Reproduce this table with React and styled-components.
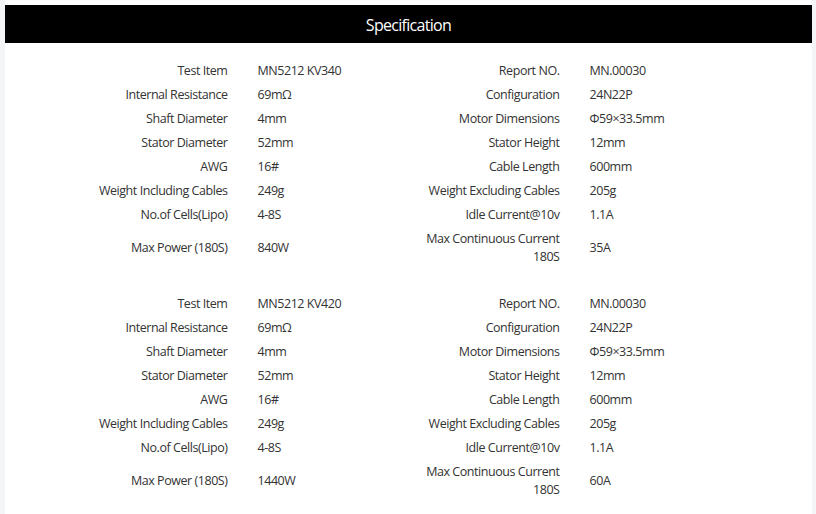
import styled, { createGlobalStyle } from 'styled-components';

const GlobalStyle = createGlobalStyle`
  html, body {
    margin: 0;
    padding: 0;
    background: #f4f5f7;
  }
`;

const Page = styled.div`
  margin: 0 4px 0 5px;
  padding-top: 5px;
  min-height: 514px;
  background: #fff;
  font-family: "Open Sans", "Liberation Sans", sans-serif;
  color: #333;
`;

const Header = styled.div`
  height: 38px;
  box-sizing: border-box;
  padding-top: 2px;
  background: #000;
  color: #fff;
  display: flex;
  align-items: center;
  justify-content: center;
  font-size: 16px;
  letter-spacing: -0.7px;
`;

const SpecTable = styled.table`
  width: 664px;
  margin: ${({ marginTop }) => marginTop ?? 16}px auto 0;
  border-collapse: collapse;
  table-layout: fixed;
  font-size: 12.5px;
  letter-spacing: -0.45px;
`;

const Cell = styled.td`
  padding: 3px 15px;
  line-height: 18px;
  vertical-align: middle;
  text-align: ${({ label }) => (label ? 'right' : 'left')};
  width: 25%;
`;

const specs = [
  {
    rows: [
      ['Test Item', 'MN5212 KV340', 'Report NO.', 'MN.00030'],
      ['Internal Resistance', '69mΩ', 'Configuration', '24N22P'],
      ['Shaft Diameter', '4mm', 'Motor Dimensions', 'Φ59×33.5mm'],
      ['Stator Diameter', '52mm', 'Stator Height', '12mm'],
      ['AWG', '16#', 'Cable Length', '600mm'],
      ['Weight Including Cables', '249g', 'Weight Excluding Cables', '205g'],
      ['No.of Cells(Lipo)', '4-8S', 'Idle Current@10v', '1.1A'],
      ['Max Power (180S)', '840W', 'Max Continuous Current 180S', '35A'],
    ],
  },
  {
    rows: [
      ['Test Item', 'MN5212 KV420', 'Report NO.', 'MN.00030'],
      ['Internal Resistance', '69mΩ', 'Configuration', '24N22P'],
      ['Shaft Diameter', '4mm', 'Motor Dimensions', 'Φ59×33.5mm'],
      ['Stator Diameter', '52mm', 'Stator Height', '12mm'],
      ['AWG', '16#', 'Cable Length', '600mm'],
      ['Weight Including Cables', '249g', 'Weight Excluding Cables', '205g'],
      ['No.of Cells(Lipo)', '4-8S', 'Idle Current@10v', '1.1A'],
      ['Max Power (180S)', '1440W', 'Max Continuous Current 180S', '60A'],
    ],
  },
];

const App = () => (
  <>
    <GlobalStyle />
    <Page>
      <Header>Specification</Header>
      {specs.map((spec, i) => (
        <SpecTable key={i} marginTop={i === 0 ? 16 : 23}>
          <tbody>
            {spec.rows.map((row, j) => (
              <tr key={j}>
                {row.map((text, k) => (
                  <Cell key={k} label={k % 2 === 0}>{text}</Cell>
                ))}
              </tr>
            ))}
          </tbody>
        </SpecTable>
      ))}
    </Page>
  </>
);

export default App;
